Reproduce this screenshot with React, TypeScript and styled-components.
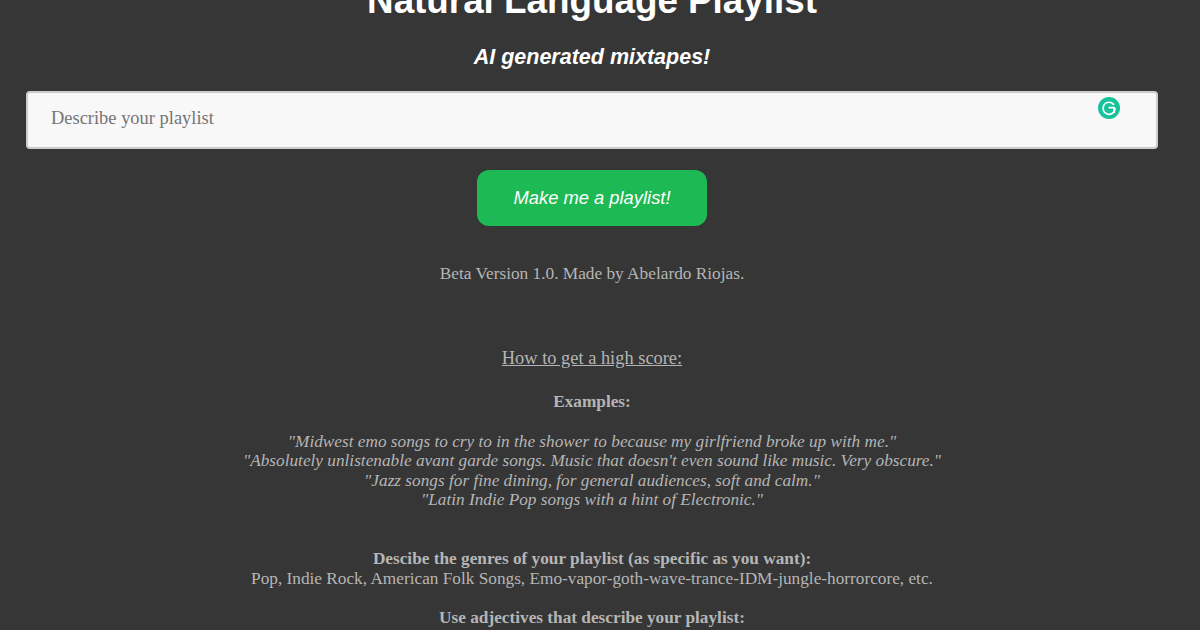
import React from "react";
import styled, { createGlobalStyle } from "styled-components";

const Global = createGlobalStyle`
  html, body { margin: 0; padding: 0; height: 630px; overflow: hidden; background: #363636; }
`;
const Page = styled.main`
  width: 1184px;
  display: flex;
  flex-direction: column;
  align-items: center;
  font-family: "Liberation Serif", "Times New Roman", serif;
  color: #b5b5b5;
  text-align: center;
`;
const Title = styled.h1`
  margin: -20px 0 0;
  font: bold 36.8px/42px "Liberation Sans", Arial, sans-serif;
  color: #fff;
`;
const Subtitle = styled.h3`
  margin: 23px 0 0;
  font: italic bold 21.5px/25px "Liberation Sans", Arial, sans-serif;
  color: #fff;
`;
const InputWrap = styled.div`
  position: relative;
  width: 1132px;
  margin-top: 21px;
`;
const Input = styled.textarea`
  display: block;
  box-sizing: border-box;
  width: 100%;
  height: 58px;
  padding: 15px 23px;
  border: 2px solid #ccc;
  border-radius: 4px;
  background: #f8f8f8;
  font: 18.45px/21px "Liberation Serif", serif;
  resize: none;
  outline: none;
  &::placeholder { color: #757575; opacity: 1; }
`;
const Badge = styled.svg`
  position: absolute;
  top: 6px;
  right: 38px;
  width: 22px;
  height: 22px;
`;
const Button = styled.button`
  width: 230px;
  height: 56px;
  margin-top: 21px;
  border: 0;
  border-radius: 12px;
  background: #1db954;
  color: #fff;
  font: italic 18.35px "Liberation Sans", Arial, sans-serif;
`;
const Version = styled.p`
  margin: 37px 0 0;
  font-size: 17.3px;
  line-height: 21px;
`;
const HowTo = styled.p`
  margin: 64px 0 0;
  font-size: 18.4px;
  line-height: 21px;
  text-decoration: underline;
`;
const Heading = styled.p<{ $top: number }>`
  margin: ${(p) => p.$top}px 0 0;
  font-size: 17.25px;
  line-height: 20px;
  font-weight: bold;
`;
const Examples = styled.p`
  margin: 19.7px 0 0;
  font-size: 17.25px;
  line-height: 19.6px;
  font-style: italic;
`;
const Body = styled.p`
  margin: 0;
  font-size: 17.25px;
  line-height: 20px;
`;

export default function App() {
  return (
    <>
      <Global />
      <Page>
        <Title>Natural Language Playlist</Title>
        <Subtitle>AI generated mixtapes!</Subtitle>
        <InputWrap>
          <Input placeholder="Describe your playlist" />
          <Badge viewBox="0 0 22 22" aria-hidden="true">
            <circle cx="11" cy="11" r="11" fill="#15c39a" />
            <path d="M15.6 7.4A6 6 0 1 0 17 11.6" fill="none" stroke="#fff" strokeWidth="1.7" strokeLinecap="round" />
            <path d="M11.2 10.6H16.2V15.4" fill="none" stroke="#fff" strokeWidth="1.7" strokeLinecap="round" strokeLinejoin="round" />
          </Badge>
        </InputWrap>
        <Button>Make me a playlist!</Button>
        <Version>Beta Version 1.0. Made by Abelardo Riojas.</Version>
        <HowTo>How to get a high score:</HowTo>
        <Heading $top={23}>Examples:</Heading>
        <Examples>
          "Midwest emo songs to cry to in the shower to because my girlfriend broke up with me."<br />
          "Absolutely unlistenable avant garde songs. Music that doesn't even sound like music. Very obscure."<br />
          "Jazz songs for fine dining, for general audiences, soft and calm."<br />
          "Latin Indie Pop songs with a hint of Electronic."
        </Examples>
        <Heading $top={39}>Descibe the genres of your playlist (as specific as you want):</Heading>
        <Body>Pop, Indie Rock, American Folk Songs, Emo-vapor-goth-wave-trance-IDM-jungle-horrorcore, etc.</Body>
        <Heading $top={19}>Use adjectives that describe your playlist:</Heading>
      </Page>
    </>
  );
}
